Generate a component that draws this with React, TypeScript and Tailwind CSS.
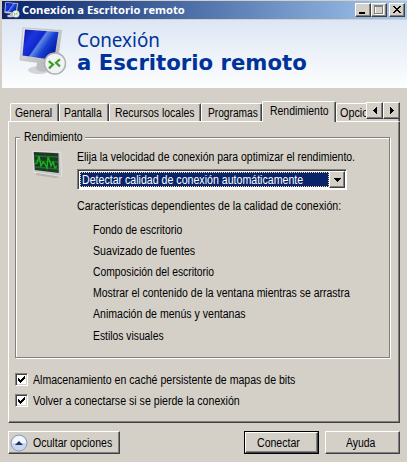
import React from 'react';

type TextProps = { children: React.ReactNode; className?: string };

function Label({ children, className = '' }: TextProps) {
  return (
    <span className={`block origin-left whitespace-nowrap text-[12px] leading-[14px] ${className}`}>{children}</span>
  );
}

function Monitor({ className }: { className: string }) {
  return (
    <svg className={className} viewBox="0 0 48 49" fill="none">
      <defs>
        <linearGradient id="screen" x1="0" y1="0" x2="1" y2=".6">
          <stop offset="0" stopColor="#0814a0" />
          <stop offset=".3" stopColor="#1c34e0" />
          <stop offset=".5" stopColor="#1028c8" />
          <stop offset=".54" stopColor="#6088e8" />
          <stop offset=".72" stopColor="#1840d0" />
          <stop offset="1" stopColor="#0018a0" />
        </linearGradient>
        <linearGradient id="bezel" x1="0" y1="0" x2="1" y2="1">
          <stop stopColor="#eeeeee" />
          <stop offset="1" stopColor="#a8abae" />
        </linearGradient>
      </defs>
      <ellipse cx="20" cy="43" rx="11" ry="4" fill="#d2d4d6" />
      <path d="M18 36h12v7c-4 3-10 2-13-1z" fill="#babec2" />
      <path d="M4 .8 42.5 3.5 38 38 1 33z" fill="url(#bezel)" stroke="#b4b7ba" strokeWidth=".7" />
      <path d="M6 2.5 39.5 5 35 33 3.5 28.5z" fill="url(#screen)" />
      <circle cx="36" cy="36.5" r="10.5" fill="#f1f2f3" stroke="#aeb1b3" strokeWidth="1.5" />
      <path d="m29.8 34.2 4.2 3.4-4 3.8M41 32.2l-4 3.6 4 3.6" stroke="#36a028" strokeWidth="2.2" />
    </svg>
  );
}

function Performance() {
  return (
    <svg className="block h-[29px] w-[32px]" viewBox="0 0 32 29" fill="none">
      <path d="M5 22 25 25 29 27 23 28 4 25z" fill="#b6b4ae" />
      <path d="M.8 1.2 28.6 2.3 29.5 26.5 1.8 22z" fill="#c6c8c6" stroke="#e8e8e5" strokeWidth=".8" />
      <path d="M1.8 2 26.4 3.2 26.8 23 2.8 20z" fill="#26352c" />
      <path d="M2 6 26 7M2 11 26 12M3 17 26 19" stroke="#0b7a17" strokeWidth="1.3" />
      <path d="m3 14 2-1 2-7 2 10 2-4 2 2 2 4 1-11 2 5 1 4 2-4 2 6 2-2" stroke="#18b820" strokeWidth="1.3" />
    </svg>
  );
}

const raised = 'border border-t-white border-l-white border-r-[#404040] border-b-[#404040] shadow-[inset_-1px_-1px_#808080]';

function CaptionButton({ kind }: { kind: 'min' | 'max' | 'close' }) {
  return (
    <div className={`h-[14px] w-[16px] bg-[#d4d0c8] ${raised}`}>
      <svg className="block h-[12px] w-[14px]" viewBox="0 0 14 12" shapeRendering="crispEdges" fill="none">
        {kind === 'min' && <path d="M3 8h6v2H3z" fill="#000" />}
        {kind === 'max' && <><path d="M3 2h8v8H3z" stroke="#fff" /><path d="M2.5 1.5h8v8h-8zM2 2.5h9" stroke="#808080" /></>}
        {kind === 'close' && <path d="M3 2h2v1h1v1h2V3h1V2h2v1h-1v1H9v1H8v1h1v1h1v1h1v1H9V8H8V7H6v1H5v1H3V8h1V7h1V6h1V5H5V4H4V3H3z" fill="#000" />}
      </svg>
    </div>
  );
}

function Tab({ children, className }: TextProps) {
  return (
    <div className={`h-[18px] shrink-0 rounded-t-[2px] border-t border-l border-r border-t-white border-l-white border-r-[#404040] pt-[2px] shadow-[inset_-1px_0_#808080] ${className}`}>
      {children}
    </div>
  );
}

function Check({ children }: TextProps) {
  return (
    <div className="flex h-[21px] items-center gap-[5px]">
      <div className="h-[13px] w-[13px] border border-t-[#808080] border-l-[#808080] border-r-white border-b-white bg-white shadow-[inset_1px_1px_#404040,inset_-1px_-1px_#d4d0c8]">
        <svg className="h-[11px] w-[11px]" viewBox="0 0 11 11" shapeRendering="crispEdges">
          <path d="M2 4h1v1h1v1h1V5h1V4h1V3h1V2h1v3H8v1H7v1H6v1H5v1H4V8H3V7H2z" />
        </svg>
      </div>
      {children}
    </div>
  );
}

const features = [
  { text: 'Fondo de escritorio', scale: 'scale-x-[.87]' },
  { text: 'Suavizado de fuentes', scale: 'scale-x-[.885]' },
  { text: 'Composición del escritorio', scale: 'scale-x-[.86]' },
  { text: 'Mostrar el contenido de la ventana mientras se arrastra', scale: 'scale-x-[.873]' },
  { text: 'Animación de menús y ventanas', scale: 'scale-x-[.88]' },
  { text: 'Estilos visuales', scale: 'scale-x-[.86]' },
];

export default function App() {
  return (
    <div className="flex h-[462px] w-[407px] flex-col overflow-hidden bg-[#d4d0c8] pt-px pl-[2px] font-['Liberation_Sans',Arial,sans-serif] text-black">
      <header className="flex h-[18px] shrink-0 items-center bg-linear-to-r from-[#0a246a] to-[#a6caf0] pr-[2px]">
        <Monitor className="ml-[2px] h-[16px] w-[16px]" />
        <span className="ml-[2px] flex-1 origin-left scale-x-[1.02] whitespace-nowrap font-['Open_Sans',sans-serif] text-[11px] font-bold leading-[14px] text-white">Conexión a Escritorio remoto</span>
        <div className="flex"><CaptionButton kind="min" /><CaptionButton kind="max" /><div className="ml-[2px]"><CaptionButton kind="close" /></div></div>
      </header>

      <section className="mt-px flex h-[68px] shrink-0 border-b border-b-white bg-linear-to-b from-[#dce6f4] via-[#edf2f9] to-[#fcfdfe] shadow-[0_1px_#d2d2d6]">
        <Monitor className="mt-[7px] ml-[17px] h-[49px] w-[48px]" />
        <h1 className="ml-[10px] pt-[9px] text-[#003399]">
          <span className="block h-[22px] w-fit origin-left scale-x-[.94] whitespace-nowrap font-['Noto_Sans',sans-serif] text-[20px] leading-[21px]">Conexión</span>
          <strong className="block h-[22px] w-fit origin-left scale-x-[1.01] whitespace-nowrap font-['DejaVu_Sans',sans-serif] text-[21px] leading-[24px]">a Escritorio remoto</strong>
        </h1>
      </section>

      <div className="relative mt-[13px] ml-[6px] flex h-[20px] w-[392px] shrink-0 items-end pl-[2px]">
        <Tab className="w-[49px] pl-[4px]"><Label className="scale-x-[.87]">General</Label></Tab>
        <Tab className="w-[50px] pl-[4px]"><Label className="scale-x-[.87]">Pantalla</Label></Tab>
        <Tab className="w-[92px] pl-[5px]"><Label className="scale-x-[.87]">Recursos locales</Label></Tab>
        <Tab className="w-[61px] pl-[6px]"><Label className="scale-x-[.85]">Programas</Label></Tab>
        <Tab className="z-10 -mb-px h-[21px] w-[74px] bg-[#d4d0c8] pl-[7px]"><Label className="scale-x-[.87]">Rendimiento</Label></Tab>
        <Tab className="w-[64px] overflow-hidden pl-[3px]"><Label className="scale-x-[.9]">Opciones</Label></Tab>
        <div className="absolute top-[1px] right-0 z-20 flex bg-[#d4d0c8]">
          {[true, false].map(left => <div key={String(left)} className={`flex h-[17px] w-[17px] items-center justify-center bg-[#d4d0c8] ${raised}`}><svg className="h-[7px] w-[4px]" viewBox="0 0 4 7" shapeRendering="crispEdges"><path d={left ? 'M4 0v7L0 3.5z' : 'M0 0v7l4-3.5z'} /></svg></div>)}
        </div>
      </div>

      <main className={`ml-[6px] h-[302px] w-[392px] shrink-0 pt-[8px] pl-[6px] ${raised}`}>
        <fieldset className="h-[228px] w-[375px] min-w-0 border border-[#808080] shadow-[1px_1px_white,inset_1px_1px_white]">
          <legend className="relative ml-[4px] h-[14px] w-[65px] bg-[#d4d0c8] px-[4px]"><Label className="scale-x-[.87]">Rendimiento</Label></legend>
          <div className="flex pt-[6px]">
            <div className="w-[61px] shrink-0 pl-[16px]"><Performance /></div>
            <div className="w-[290px] shrink-0">
              <Label className="w-fit scale-x-[.872]">Elija la velocidad de conexión para optimizar el rendimiento.</Label>
              <div className="mt-[5px] flex h-[21px] w-[270px] border border-t-[#808080] border-l-[#808080] border-r-white border-b-white bg-white p-px shadow-[inset_1px_1px_#404040]">
                <div className="my-px ml-px w-[249px] border border-dotted border-[#f5db95] bg-[#0a246a] pl-px text-white"><Label className="scale-x-[.884]">Detectar calidad de conexión automáticamente</Label></div>
                <div className={`flex w-[17px] items-center justify-center bg-[#d4d0c8] ${raised}`}><svg className="h-[4px] w-[7px]" viewBox="0 0 7 4" shapeRendering="crispEdges"><path d="M0 0h7v1H6v1H5v1H4v1H3V3H2V2H1V1H0z" /></svg></div>
              </div>
              <Label className="mt-[9px] w-fit scale-x-[.888]">Características dependientes de la calidad de conexión:</Label>
              <div className="mt-[6px] ml-[16px]">
                {features.map(({ text, scale }) => <div className="flex h-[21.2px] items-center" key={text}><Label className={scale}>{text}</Label></div>)}
              </div>
            </div>
          </div>
        </fieldset>
        <div className="mt-[11px]">
          <Check><Label className="scale-x-[.88]">Almacenamiento en caché persistente de mapas de bits</Label></Check>
          <Check><Label className="scale-x-[.883]">Volver a conectarse si se pierde la conexión</Label></Check>
        </div>
      </main>

      <footer className="mt-[8px] ml-[6px] flex h-[23px] w-[392px] shrink-0">
        <button className={`flex w-[112px] items-center pl-px ${raised}`}>
          <svg className="mr-[5px] h-[18px] w-[18px] shrink-0" viewBox="0 0 18 18"><circle cx="9" cy="9" r="8" fill="#c9d6ee" stroke="#8d9cc4" /><path d="M2 9a7 7 0 0 1 14 0" fill="#f3f7ff" /><path d="m5 11 4-4 4 4z" fill="#17346f" /></svg>
          <Label className="scale-x-[.88]">Ocultar opciones</Label>
        </button>
        <button className="ml-[124px] flex w-[75px] border border-black"><span className={`flex h-full w-full items-center justify-center ${raised}`}><Label className="origin-center scale-x-[.88]">Conectar</Label></span></button>
        <button className={`ml-[6px] flex w-[75px] items-center justify-center ${raised}`}><Label className="origin-center scale-x-[.87]">Ayuda</Label></button>
      </footer>
    </div>
  );
}
